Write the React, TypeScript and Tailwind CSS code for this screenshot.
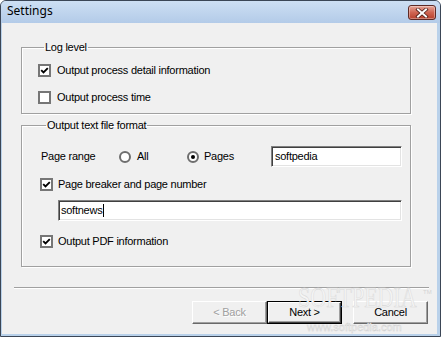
import React from "react";

function Check({ checked }: { checked?: boolean }) {
  return (
    <div className="w-[13px] h-[13px] shrink-0 bg-white border-2 border-[#767676] flex items-center justify-center">
      {checked && (
        <svg width="9" height="9" viewBox="0 0 9 9">
          <path d="M1.2 4.2 L3.5 6.5 L7.8 2.2" stroke="#000" strokeWidth="1.9" fill="none" />
        </svg>
      )}
    </div>
  );
}

function Radio({ checked }: { checked?: boolean }) {
  return (
    <svg width="12" height="12" viewBox="0 0 12 12" className="shrink-0">
      <circle cx="6" cy="6" r="5" fill="#fff" stroke="#6e6e6e" strokeWidth="2" />
      {checked && <circle cx="6" cy="6" r="2" fill="#000" />}
    </svg>
  );
}

function Btn({ children, kind }: { children: React.ReactNode; kind?: "default" | "disabled" }) {
  if (kind === "default") {
    return (
      <div className="w-[75px] h-[23px] border border-black bg-[#f0f0f0]">
        <div className="w-full h-full border border-t-white border-l-white border-b-[#404040] border-r-[#404040] shadow-[inset_-1px_-1px_0_#a0a0a0] flex items-center justify-center text-black">
          {children}
        </div>
      </div>
    );
  }
  return (
    <div
      className={
        kind === "disabled"
          ? "w-[75px] h-[23px] border border-t-white border-l-white border-b-[#696969] border-r-[#696969] shadow-[inset_-1px_-1px_0_#a0a0a0] bg-[#f0f0f0] flex items-center justify-center text-[#a0a0a0] [text-shadow:1px_1px_0_#fff]"
          : "w-[75px] h-[23px] border border-t-white border-l-white border-b-[#696969] border-r-[#696969] shadow-[inset_-1px_-1px_0_#a0a0a0] bg-[#f0f0f0] flex items-center justify-center text-black"
      }
    >
      {children}
    </div>
  );
}

export default function App() {
  return (
    <div className="w-[441px] h-[337px] overflow-hidden bg-white">
      <div className="w-[441px] h-[337px] rounded-t-[6px] border border-[#3b4656] bg-[#b9d1ea] flex flex-col pl-[1px] pr-[3px] pb-[2px]">
        {/* Title bar */}
        <div className="h-[22px] shrink-0 -ml-[1px] -mr-[3px] rounded-t-[5px] bg-gradient-to-b from-[#cddff3] to-[#b3cbe8] flex items-start justify-between pl-[6px] pr-[4px]">
          <span className="mt-[2px] text-[12px] leading-[16px] text-black font-['Noto_Sans','Open_Sans',sans-serif]">
            Settings
          </span>
          <div className="mt-[4px] w-[28px] h-[15px] rounded-[3px] border border-[#5e2a25] bg-gradient-to-b from-[#e6a598] via-[#cf6552] to-[#b8402c] flex items-center justify-center shadow-[inset_0_0_0_1px_rgba(255,255,255,0.35)]">
            <svg width="14" height="10" viewBox="0 0 14 10">
              <path d="M3 1.5 L11 8.5 M11 1.5 L3 8.5" stroke="#4a1d17" strokeWidth="3.6" strokeLinecap="square" />
              <path d="M3 1.5 L11 8.5 M11 1.5 L3 8.5" stroke="#fff" strokeWidth="2" strokeLinecap="square" />
            </svg>
          </div>
        </div>

        {/* Content */}
        <div className="relative flex-1 bg-[#f0f0f0] flex flex-col text-[11px] leading-[13px] tracking-[-0.25px] text-black font-['Liberation_Sans',Arial,sans-serif]">
          <fieldset className="ml-[19px] mt-[18px] w-[390px] border border-[#a0a0a0] shadow-[inset_1px_1px_0_#fff,1px_1px_0_#fff] pl-[16px] pb-[9px] flex flex-col">
            <legend className="ml-[6px] px-[1px] h-[13px]">Log level</legend>
            <div className="mt-[10px] h-[13px] flex items-center gap-[6px]">
              <Check checked />
              <span>Output process detail information</span>
            </div>
            <div className="mt-[14px] h-[13px] flex items-center gap-[6px]">
              <Check />
              <span>Output process time</span>
            </div>
          </fieldset>

          <fieldset className="ml-[19px] mt-[5px] w-[390px] border border-[#a0a0a0] shadow-[inset_1px_1px_0_#fff,1px_1px_0_#fff] pl-[18px] pb-[18px] flex flex-col">
            <legend className="ml-[6px] px-[1px] h-[13px]">Output text file format</legend>
            <div className="mt-[14px] h-[21px] flex items-center">
              <span className="w-[79px] pl-[1px]">Page range</span>
              <div className="w-[68px] flex items-center gap-[6px]">
                <Radio />
                <span>All</span>
              </div>
              <div className="w-[84px] flex items-center gap-[5px]">
                <Radio checked />
                <span>Pages</span>
              </div>
              <div className="w-[131px] h-[21px] bg-white border border-t-[#808080] border-l-[#808080] border-b-white border-r-white shadow-[inset_1px_1px_0_#404040,inset_-1px_-1px_0_#e3e3e3] flex items-center pl-[3px]">
                softpedia
              </div>
            </div>
            <div className="mt-[11px] h-[13px] flex items-center gap-[5px]">
              <Check checked />
              <span>Page breaker and page number</span>
            </div>
            <div className="mt-[9px] ml-[18px] w-[344px] h-[21px] bg-white border border-t-[#808080] border-l-[#808080] border-b-white border-r-white shadow-[inset_1px_1px_0_#404040,inset_-1px_-1px_0_#e3e3e3] flex items-center pl-[2px]">
              <span>softnews</span>
              <span className="w-[1px] h-[13px] bg-black ml-[1px]" />
            </div>
            <div className="mt-[14px] h-[13px] flex items-center gap-[5px]">
              <Check checked />
              <span>Output PDF information</span>
            </div>
          </fieldset>

          <div className="mt-[20px] ml-[12px] w-[415px] h-[2px] border-t border-t-[#a0a0a0] border-b border-b-white" />

          <div className="mt-[12px] pl-[190px] flex items-center">
            <Btn kind="disabled">&lt; Back</Btn>
            <Btn kind="default">Next &gt;</Btn>
            <div className="ml-[11px]">
              <Btn>Cancel</Btn>
            </div>
          </div>

          {/* faint watermark overlay */}
          <span className="absolute left-[296px] top-[263px] origin-left scale-x-[0.76] text-[29px] leading-[22px] tracking-[0px] font-['Liberation_Serif',serif] text-[#f5f5f5] [-webkit-text-stroke:0.6px_#d9d9d9] pointer-events-none select-none">
            SOFTPEDIA
          </span>
          <span className="absolute left-[421px] top-[266px] text-[6px] leading-[7px] tracking-[0px] text-[#d4d4d4] pointer-events-none select-none">
            TM
          </span>
          <span className="absolute left-[305px] top-[299px] text-[11px] leading-[11px] tracking-[0px] font-['Liberation_Sans',sans-serif] text-[#f4f4f4] [-webkit-text-stroke:0.4px_#cfcfcf] pointer-events-none select-none">
            www.softpedia.com
          </span>
        </div>
      </div>
    </div>
  );
}
